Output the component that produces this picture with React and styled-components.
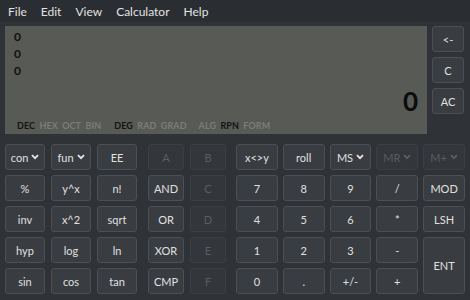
import React from 'react'
import styled, { createGlobalStyle } from 'styled-components'

const Global = createGlobalStyle`
  html, body {
    margin: 0;
    background: #2f3237;
  }
  body {
    font-family: Lato, "Open Sans", sans-serif;
  }
`

const Window = styled.div`
  width: 470px;
  height: 300px;
  background: #2f3237;
  overflow: hidden;
`

const MenuBar = styled.div`
  height: 22px;
  display: flex;
  align-items: center;
  gap: 14px;
  padding-left: 8px;
  background: #2a2d31;
  color: #e2e2e2;
  font-size: 12px;
`

const Body = styled.div`
  padding: 4px 5px 0 5px;
`

const Top = styled.div`
  display: flex;
  gap: 5px;
`

const Display = styled.div`
  flex: 1;
  height: 108px;
  background: #585a56;
  display: flex;
  flex-direction: column;
  box-sizing: border-box;
  padding: 2px 9px 3px 9px;
`

const StackLine = styled.div`
  font-size: 12px;
  font-weight: 700;
  line-height: 17px;
  color: #111;
`

const BigValue = styled.div`
  margin-top: auto;
  text-align: right;
  font-size: 26px;
  font-weight: 700;
  line-height: 24px;
  color: #0c0c0c;
`

const Modes = styled.div`
  display: flex;
  padding-left: 3px;
  margin-top: 7px;
  font-size: 9px;
  font-weight: 700;
  line-height: 11px;
`

const Mode = styled.span`
  color: ${p => (p.$on ? '#141414' : '#7b7d79')};
  margin-right: ${p => p.$gap ?? 4.3}px;
  letter-spacing: 0.1px;
`

const Side = styled.div`
  display: flex;
  flex-direction: column;
  gap: 5px;
  padding-right: 1px;
`

const Key = styled.div`
  box-sizing: border-box;
  height: 26px;
  display: flex;
  align-items: center;
  justify-content: center;
  gap: 3px;
  border-radius: 3px;
  font-size: 11px;
  background: ${p => (p.$off ? '#33363a' : '#393c41')};
  border: 1px solid ${p => (p.$off ? '#3b3e42' : '#4c4f54')};
  color: ${p => (p.$off ? '#5b5d61' : '#e0e0e0')};
  grid-row: ${p => (p.$span ? `span ${p.$span}` : 'auto')};
  ${p => p.$span && 'height: auto;'}
`

const SideKey = styled(Key)`
  width: 32px;
`

const Pad = styled.div`
  display: flex;
  margin-top: 10px;
`

const Group = styled.div`
  display: grid;
  grid-template-columns: repeat(${p => p.$cols}, ${p => p.$w}px);
  grid-auto-rows: 26px;
  column-gap: ${p => p.$gap}px;
  row-gap: 5px;
  margin-right: ${p => p.$after}px;
`

const Chevron = ({ off }) => (
  <svg width="8" height="6" viewBox="0 0 8 6">
    <polyline
      points="1,1.2 4,4.2 7,1.2"
      fill="none"
      stroke={off ? '#5b5d61' : '#e6e6e6'}
      strokeWidth="1.8"
    />
  </svg>
)

const Drop = ({ label, off }) => (
  <Key $off={off}>
    {label}
    <Chevron off={off} />
  </Key>
)

const left = [
  <Drop key="con" label="con" />,
  <Drop key="fun" label="fun" />,
  'EE', '%', 'y^x', 'n!', 'inv', 'x^2', 'sqrt', 'hyp', 'log', 'ln', 'sin', 'cos', 'tan'
]

const logic = [
  ['A', true], ['B', true], ['AND'], ['C', true], ['OR'], ['D', true],
  ['XOR'], ['E', true], ['CMP'], ['F', true]
]

const App = () => {
  return (
    <Window>
      <Global />
      <MenuBar>
        <span>File</span>
        <span>Edit</span>
        <span>View</span>
        <span>Calculator</span>
        <span>Help</span>
      </MenuBar>
      <Body>
        <Top>
          <Display>
            <StackLine>0</StackLine>
            <StackLine>0</StackLine>
            <StackLine>0</StackLine>
            <BigValue>0</BigValue>
            <Modes>
              <Mode $on>DEC</Mode>
              <Mode>HEX</Mode>
              <Mode>OCT</Mode>
              <Mode $gap={13}>BIN</Mode>
              <Mode $on>DEG</Mode>
              <Mode>RAD</Mode>
              <Mode $gap={12}>GRAD</Mode>
              <Mode>ALG</Mode>
              <Mode $on>RPN</Mode>
              <Mode>FORM</Mode>
            </Modes>
          </Display>
          <Side>
            <SideKey>&lt;-</SideKey>
            <SideKey>C</SideKey>
            <SideKey>AC</SideKey>
          </Side>
        </Top>
        <Pad>
          <Group $cols={3} $w={40} $gap={6} $after={11}>
            {left.map((k, i) => (typeof k === 'string' ? <Key key={i}>{k}</Key> : k))}
          </Group>
          <Group $cols={2} $w={36} $gap={6} $after={10}>
            {logic.map(([t, off]) => (
              <Key key={t} $off={off}>{t}</Key>
            ))}
          </Group>
          <Group $cols={5} $w={41.8} $gap={5} $after={0}>
            <Key>x&lt;&gt;y</Key>
            <Key>roll</Key>
            <Drop label="MS" />
            <Drop label="MR" off />
            <Drop label="M+" off />
            <Key>7</Key>
            <Key>8</Key>
            <Key>9</Key>
            <Key>/</Key>
            <Key>MOD</Key>
            <Key>4</Key>
            <Key>5</Key>
            <Key>6</Key>
            <Key>*</Key>
            <Key>LSH</Key>
            <Key>1</Key>
            <Key>2</Key>
            <Key>3</Key>
            <Key>-</Key>
            <Key $span={2}>ENT</Key>
            <Key>0</Key>
            <Key>.</Key>
            <Key>+/-</Key>
            <Key>+</Key>
          </Group>
        </Pad>
      </Body>
    </Window>
  )
}

export default App
